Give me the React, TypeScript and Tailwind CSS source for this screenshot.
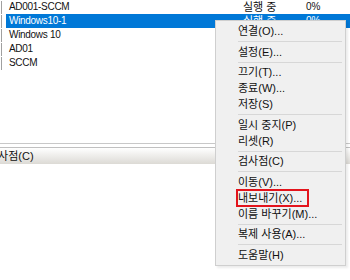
import React from "react";

const rows = [
  { name: "AD001-SCCM", state: "실행 중", cpu: "0%" },
  { name: "Windows10-1", state: "실행 중", cpu: "0%", selected: true },
  { name: "Windows 10", state: "", cpu: "" },
  { name: "AD01", state: "", cpu: "" },
  { name: "SCCM", state: "", cpu: "" },
];

type Item = { label: string; sep?: number; boxed?: boolean };
const items: Item[] = [
  { label: "연결(O)...", sep: 5 },
  { label: "설정(E)...", sep: 4 },
  { label: "끄기(T)..." },
  { label: "종료(W)..." },
  { label: "저장(S)", sep: 5 },
  { label: "일시 중지(P)" },
  { label: "리셋(R)", sep: 4 },
  { label: "검사점(C)", sep: 5 },
  { label: "이동(V)..." },
  { label: "내보내기(X)...", boxed: true },
  { label: "이름 바꾸기(M)...", sep: 4 },
  { label: "복제 사용(A)...", sep: 5 },
  { label: "도움말(H)" },
];

const font = { fontFamily: '"Liberation Sans", "Noto Sans CJK KR", sans-serif' };

export default function App() {
  return (
    <div className="relative w-[350px] h-[280px] bg-white overflow-hidden text-[11px] text-[#111]" style={font}>
      <div className="flex flex-col">
        {rows.map((r) => (
          <div key={r.name} className="flex h-[14px] items-center">
            <div className="w-[1px] h-[13px] bg-[#a0a0a0] ml-[1px] mr-[4px]" />
            <div className={`flex flex-1 h-[14px] items-center ${r.selected ? "bg-[#0078d7] text-white" : ""}`}>
              <span className="pl-[3px] w-[237px] leading-[14px] text-[10px] tracking-[-0.3px]">{r.name}</span>
              <span className="w-[63px] leading-[14px]">{r.state}</span>
              <span className="leading-[14px] text-[10px]">{r.cpu}</span>
            </div>
          </div>
        ))}
      </div>
      <div className="mt-[73px] h-[1px] bg-[#c8c8c8]" />
      <div className="mt-[3px] border-t border-[#c0c0c0] h-[17px] bg-gradient-to-b from-white to-[#dcdad5] flex items-center">
        <span className="-ml-[12px] leading-[14px]">검사점(C)</span>
      </div>

      <div className="absolute left-[215px] top-[20px] w-[131px] bg-[#f0f0f0] border border-[#cfcfcf] pt-[2px] pb-[2px] shadow-[2px_2px_2px_rgba(0,0,0,0.08)]">
        {items.map((it) => (
          <React.Fragment key={it.label}>
            <div className="h-[16px] flex items-center pl-[22px]">
              <span className={`leading-[14px] ${it.boxed ? "relative" : ""}`}>
                {it.label}
                {it.boxed && (
                  <span className="absolute -left-[2px] -top-[2px] w-[73px] h-[18px] border-2 border-[#e3141c]" />
                )}
              </span>
            </div>
            {it.sep && (
              <div className={`${it.sep === 5 ? "h-[5px]" : "h-[4px]"} flex items-center pl-[22px] pr-[3px]`}>
                <div className="h-[1px] w-full bg-[#d7d7d7]" />
              </div>
            )}
          </React.Fragment>
        ))}
      </div>
    </div>
  );
}
